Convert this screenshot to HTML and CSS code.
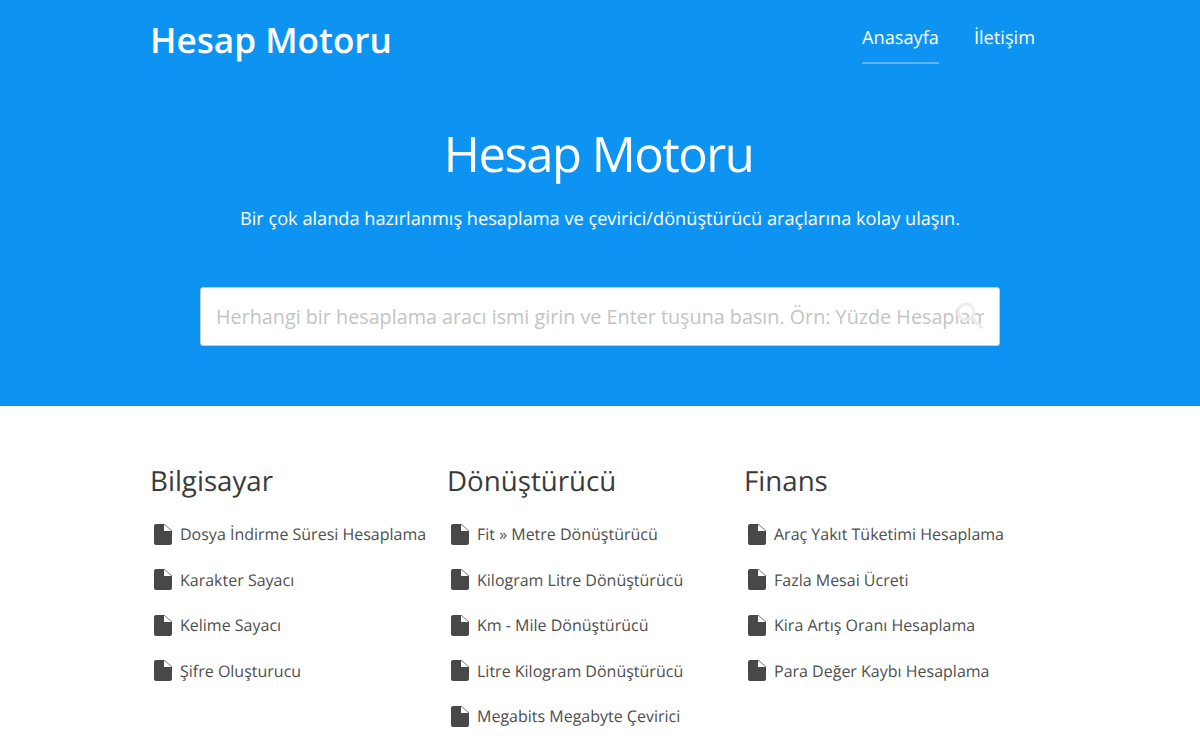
FILE: index.html
```html
<!DOCTYPE html>
<html lang="tr">
<head>
    <meta charset="utf-8">
    <title>Hesap Motoru</title>
    <link rel="stylesheet" href="styles.css">
</head>
<body>
    <svg class="defs" width="0" height="0">
        <symbol id="file" viewBox="0 0 18 21">
            <path d="M2 0H10V7H18V19A2 2 0 0 1 16 21H2A2 2 0 0 1 0 19V2A2 2 0 0 1 2 0Z"/>
            <path class="fold" d="M10 0L18 7"/>
        </symbol>
    </svg>
    <header class="hero">
        <div class="container topbar">
            <a class="brand" href="#">Hesap Motoru</a>
            <nav class="nav">
                <a class="nav-link active" href="#">Anasayfa</a>
                <a class="nav-link" href="#">İletişim</a>
            </nav>
        </div>
        <h1>Hesap Motoru</h1>
        <p class="lead">Bir çok alanda hazırlanmış hesaplama ve çevirici/dönüştürücü araçlarına kolay ulaşın.</p>
        <form class="search">
            <input type="text" placeholder="Herhangi bir hesaplama aracı ismi girin ve Enter tuşuna basın. Örn: Yüzde Hesaplama">
            <svg class="search-icon" viewBox="0 0 30 30" width="30" height="30">
                <circle cx="11" cy="11" r="8"/>
                <path d="M17 17L27.5 27.5"/>
            </svg>
        </form>
    </header>
    <main class="container columns">
        <section class="column">
            <h2>Bilgisayar</h2>
            <ul>
                <li><svg class="file-icon"><use href="#file"/></svg><a href="#">Dosya İndirme Süresi Hesaplama</a></li>
                <li><svg class="file-icon"><use href="#file"/></svg><a href="#">Karakter Sayacı</a></li>
                <li><svg class="file-icon"><use href="#file"/></svg><a href="#">Kelime Sayacı</a></li>
                <li><svg class="file-icon"><use href="#file"/></svg><a href="#">Şifre Oluşturucu</a></li>
            </ul>
        </section>
        <section class="column">
            <h2>Dönüştürücü</h2>
            <ul>
                <li><svg class="file-icon"><use href="#file"/></svg><a href="#">Fit » Metre Dönüştürücü</a></li>
                <li><svg class="file-icon"><use href="#file"/></svg><a href="#">Kilogram Litre Dönüştürücü</a></li>
                <li><svg class="file-icon"><use href="#file"/></svg><a href="#">Km - Mile Dönüştürücü</a></li>
                <li><svg class="file-icon"><use href="#file"/></svg><a href="#">Litre Kilogram Dönüştürücü</a></li>
                <li><svg class="file-icon"><use href="#file"/></svg><a href="#">Megabits Megabyte Çevirici</a></li>
            </ul>
        </section>
        <section class="column">
            <h2>Finans</h2>
            <ul>
                <li><svg class="file-icon"><use href="#file"/></svg><a href="#">Araç Yakıt Tüketimi Hesaplama</a></li>
                <li><svg class="file-icon"><use href="#file"/></svg><a href="#">Fazla Mesai Ücreti</a></li>
                <li><svg class="file-icon"><use href="#file"/></svg><a href="#">Kira Artış Oranı Hesaplama</a></li>
                <li><svg class="file-icon"><use href="#file"/></svg><a href="#">Para Değer Kaybı Hesaplama</a></li>
            </ul>
        </section>
    </main>
</body>
</html>
```
FILE: styles.css
```css
html, body {
    height: 750px;
    overflow: hidden;
}
body {
    margin: 0;
    font-family: "Open Sans", sans-serif;
    color: #333;
    background: #fff;
    text-rendering: geometricPrecision;
}
a {
    color: inherit;
    text-decoration: none;
}
.defs {
    display: block;
    height: 0;
}
.fold {
    fill: none;
    stroke: #777;
    stroke-width: 1;
}
.container {
    width: 900px;
    margin: 0 auto;
}
.hero {
    height: 406px;
    background: #0d94f3;
    color: #fff;
    text-align: center;
    overflow: hidden;
}
.topbar {
    display: flex;
    justify-content: space-between;
    height: 64px;
}
.brand {
    margin-top: 16px;
    font-size: 35.15px;
    line-height: 48px;
    font-weight: 600;
}
.nav {
    display: flex;
    gap: 35px;
    margin-right: 15px;
}
.nav-link {
    height: 62px;
    line-height: 76px;
    font-size: 18.2px;
}
.nav-link.active {
    border-bottom: 2px solid #5bb5f7;
}
.hero h1 {
    margin: 54px 3px 0 0;
    font-size: 49px;
    line-height: 72px;
    font-weight: 400;
    letter-spacing: -1.5px;
}
.lead {
    margin: 16px 0 0;
    font-size: 18.2px;
    line-height: 26px;
}
.search {
    position: relative;
    width: 800px;
    height: 59px;
    margin: 55px auto 0;
}
.search input {
    box-sizing: border-box;
    width: 100%;
    height: 100%;
    padding: 0 15px;
    border: 1px solid #ccc;
    border-radius: 3px;
    background: #fff;
    font-family: inherit;
    font-size: 19.75px;
    color: #333;
    outline: none;
}
.search input::placeholder {
    color: #c4c4c4;
    opacity: 1;
}
.search-icon {
    position: absolute;
    top: 14px;
    right: 15px;
    fill: none;
    stroke: #ececec;
    stroke-width: 3;
}
.columns {
    display: flex;
    padding-top: 56px;
}
.column {
    width: 297px;
}
.column h2 {
    margin: 0 0 11.5px;
    font-size: 27.7px;
    line-height: 38px;
    font-weight: 400;
    color: #3a3a3a;
}
.column ul {
    margin: 0;
    padding: 0;
    list-style: none;
}
.column li {
    display: flex;
    align-items: center;
    height: 45.5px;
    font-size: 16px;
    color: #4e4e4e;
}
.file-icon {
    width: 18px;
    height: 21px;
    margin: 0 8px 0 4px;
    fill: #484848;
}
```
